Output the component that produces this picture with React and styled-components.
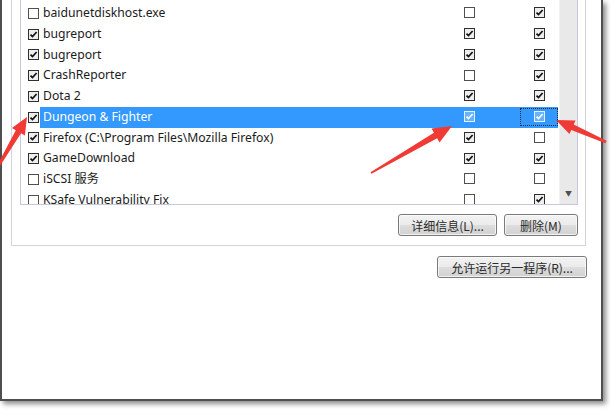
import styled, { createGlobalStyle } from "styled-components";

const GlobalStyle = createGlobalStyle`
  html, body {
    margin: 0;
    padding: 0;
    background: #ffffff;
  }
  body {
    width: 611px;
    height: 411px;
    overflow: hidden;
    font-family: "Noto Sans", "Noto Sans CJK SC", sans-serif;
    color: #1b1b1b;
  }
`

const Page = styled.div`
  position: relative;
  width: 611px;
  height: 411px;
  overflow: hidden;
`
const Window = styled.div`
  width: 603px;
  height: 401px;
  box-sizing: border-box;
  background: #ffffff;
  border-left: 2px solid #4f4f4f;
  border-right: 2px solid #4f4f4f;
  border-bottom: 2px solid #4f4f4f;
  box-shadow: 3px 3px 5px rgba(0, 0, 0, 0.45);
  padding: 0 15px 0 9px;
  display: flex;
  flex-direction: column;
  align-items: stretch;
`
const GroupBox = styled.div`
  height: 246px;
  box-sizing: border-box;
  border: 1px solid #d3d3e3;
  border-top: none;
  padding: 0 7px 0 8px;
  display: flex;
  flex-direction: column;
`
const ListBox = styled.div`
  height: 205px;
  box-sizing: border-box;
  border: 1px solid #c6c7da;
  border-top: none;
  display: flex;
  overflow: hidden;
`
const Rows = styled.div`
  flex: 1;
  padding-top: 3px;
  display: flex;
  flex-direction: column;
`
const Row = styled.div`
  height: 20.75px;
  flex-shrink: 0;
  display: flex;
  align-items: stretch;
`
const CheckCell = styled.div`
  width: 19px;
  box-sizing: border-box;
  padding-left: 7px;
  display: flex;
  align-items: center;
`
const RowBody = styled.div`
  flex: 1;
  display: grid;
  grid-template-columns: 1fr 38px 38px;
  column-gap: 32px;
  padding-left: 3px;
  margin-right: 1px;
  background: ${p => (p.$selected ? "#3399ff" : "transparent")};
  color: ${p => (p.$selected ? "#ffffff" : "#1b1b1b")};
`
const Name = styled.div`
  font-size: 12.2px;
  line-height: 20.75px;
  white-space: nowrap;
  overflow: hidden;
`
const FlagCell = styled.div`
  display: flex;
  align-items: center;
  justify-content: center;
  box-sizing: border-box;
  margin: 1px 0 2px;
  border: 1px dotted ${p => (p.$focus ? "#1a2a40" : "transparent")};
`
const Box = styled.span`
  width: 11px;
  height: 11px;
  box-sizing: border-box;
  border: 1px solid ${p => (p.$light ? "#e6f1ff" : p.$on ? "#2f2f2f" : "#505050")};
  background: ${p => (p.$light ? "#66b3ff" : p.$on ? "#eeeeee" : "#ffffff")};
  display: flex;
  align-items: center;
  justify-content: center;
`
const ScrollTrack = styled.div`
  width: 17px;
  background: #e9e9ea;
  border-left: 1px solid #f3f3f3;
  display: flex;
  flex-direction: column;
  justify-content: flex-end;
  align-items: center;
  padding-bottom: 6px;
  color: #505050;
  font-size: 7px;
`
const ButtonRow = styled.div`
  display: flex;
  justify-content: flex-end;
  gap: 7px;
  margin-top: 9px;
`
const Button = styled.button`
  width: ${p => p.$w}px;
  height: 22px;
  box-sizing: border-box;
  border: 1px solid #7a7a7a;
  border-radius: 3px;
  background: linear-gradient(#f3f3f3 0%, #ebebeb 48%, #dddddd 52%, #d1d1d1 100%);
  box-shadow: inset 0 0 0 1px rgba(255, 255, 255, 0.7);
  font-family: "Noto Sans CJK SC", "Noto Sans", sans-serif;
  font-size: 12px;
  color: #2a2a2a;
  padding: 0;
  display: flex;
  align-items: center;
  justify-content: center;
`
const Footer = styled.div`
  display: flex;
  justify-content: flex-end;
  margin-top: 10px;
  margin-right: -1px;
`
const Overlay = styled.svg`
  position: absolute;
  left: 0;
  top: 0;
  pointer-events: none;
`

const programs = [
  { name: "baidunetdiskhost.exe", on: false, a: false, b: true },
  { name: "bugreport", on: true, a: true, b: true },
  { name: "bugreport", on: true, a: true, b: true },
  { name: "CrashReporter", on: true, a: false, b: true },
  { name: "Dota 2", on: true, a: true, b: true },
  { name: "Dungeon & Fighter", on: true, a: true, b: true, selected: true },
  { name: "Firefox (C:\\Program Files\\Mozilla Firefox)", on: true, a: true, b: false },
  { name: "GameDownload", on: true, a: true, b: true },
  { name: "iSCSI 服务", on: false, a: false, b: false },
  { name: "KSafe Vulnerability Fix", on: false, a: false, b: true },
];

function Check({ on, light }) {
  return (
    <Box $on={on} $light={light}>
      {on && (
        <svg width="9" height="9" viewBox="0 0 9 9">
          <path d="M1.5 4.6 L3.5 6.6 L7.6 2" fill="none" stroke={light ? "#ffffff" : "#111111"} strokeWidth="1.7" />
        </svg>
      )}
    </Box>
  );
}

function arrowPoints(x0, y0, x1, y1, headLen, headHalf, tailW, neckW) {
  const dx = x1 - x0;
  const dy = y1 - y0;
  const len = Math.hypot(dx, dy);
  const ux = dx / len;
  const uy = dy / len;
  const nx = -uy;
  const ny = ux;
  const bx = x1 - ux * headLen;
  const by = y1 - uy * headLen;
  const pts = [
    [x0 + nx * tailW, y0 + ny * tailW],
    [bx + nx * neckW, by + ny * neckW],
    [bx + nx * headHalf, by + ny * headHalf],
    [x1, y1],
    [bx - nx * headHalf, by - ny * headHalf],
    [bx - nx * neckW, by - ny * neckW],
    [x0 - nx * tailW, y0 - ny * tailW],
  ];
  return pts.map(p => p.join(",")).join(" ");
}

const arrows = [
  [-4, 170, 27, 117, 17, 7.5, 1.2, 3],
  [371, 173, 452, 126, 19, 8, 1, 3.2],
  [606, 142, 556, 120, 18, 7.5, 1.5, 3],
];

export default function App() {
  return (
    <Page>
      <GlobalStyle />
      <Window>
        <GroupBox>
          <ListBox>
            <Rows>
              {programs.map((p, i) => (
                <Row key={i}>
                  <CheckCell>
                    <Check on={p.on} />
                  </CheckCell>
                  <RowBody $selected={p.selected}>
                    <Name>{p.name}</Name>
                    <FlagCell>
                      <Check on={p.a} light={p.selected} />
                    </FlagCell>
                    <FlagCell $focus={p.selected}>
                      <Check on={p.b} light={p.selected} />
                    </FlagCell>
                  </RowBody>
                </Row>
              ))}
            </Rows>
            <ScrollTrack>▼</ScrollTrack>
          </ListBox>
          <ButtonRow>
            <Button $w={99}>详细信息(L)...</Button>
            <Button $w={74}>删除(M)</Button>
          </ButtonRow>
        </GroupBox>
        <Footer>
          <Button $w={150}>允许运行另一程序(R)...</Button>
        </Footer>
      </Window>
      <Overlay width="611" height="411" viewBox="0 0 611 411">
        {arrows.map((a, i) => (
          <polygon key={i} points={arrowPoints(...a)} fill="#ef3a35" />
        ))}
      </Overlay>
    </Page>
  );
}
